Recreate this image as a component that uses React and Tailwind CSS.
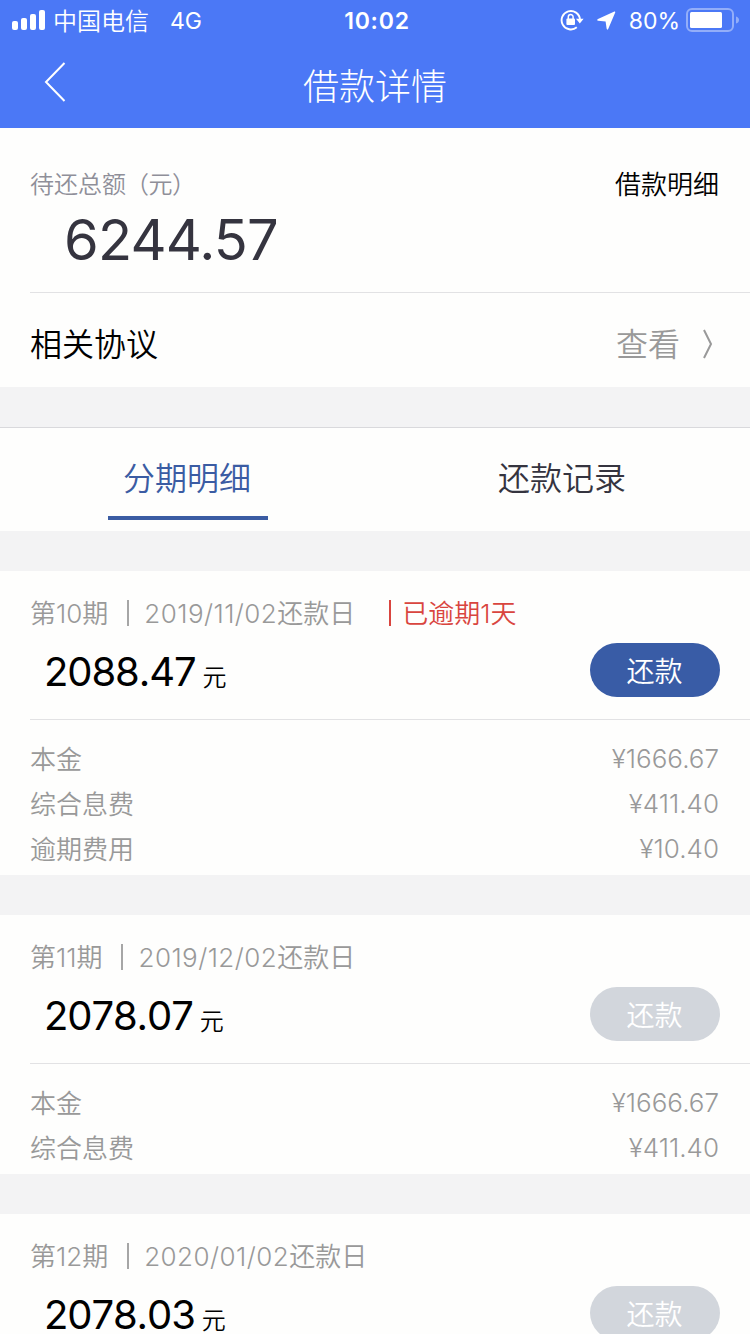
import React, { useState } from "react";
import clsx from "clsx";

const TABS = ["分期明细", "还款记录"];

const INSTALLMENTS = [
  {
    term: "第10期",
    date: "2019/11/02",
    overdue: "已逾期1天",
    amount: "2088.47",
    payable: true,
    items: [
      { label: "本金", value: "¥1666.67" },
      { label: "综合息费", value: "¥411.40" },
      { label: "逾期费用", value: "¥10.40" },
    ],
  },
  {
    term: "第11期",
    date: "2019/12/02",
    amount: "2078.07",
    payable: false,
    items: [
      { label: "本金", value: "¥1666.67" },
      { label: "综合息费", value: "¥411.40" },
    ],
  },
  {
    term: "第12期",
    date: "2020/01/02",
    amount: "2078.03",
    payable: false,
    items: [],
  },
];

const StatusBar = () => (
  <div className="grid h-10 grid-cols-3 items-center px-3 text-2xl leading-9 text-white">
    <div className="flex items-center">
      <svg width="33" height="20" viewBox="0 0 33 20" fill="currentColor">
        <rect x="0" y="11" width="6" height="9" rx="2" />
        <rect x="9" y="8" width="6" height="12" rx="2" />
        <rect x="18" y="4" width="6" height="16" rx="2" />
        <rect x="27" y="0" width="6" height="20" rx="2" />
      </svg>
      <span className="ml-2 pt-[3px] font-[350]">中国电信</span>
      <span className="ml-[21px] pt-0.5 text-[23px]">4G</span>
    </div>
    <div className="pt-0.5 pl-1 text-center text-[23px] font-semibold tracking-[0.8px]">
      10:02
    </div>
    <div className="flex items-center justify-end">
      <svg width="24" height="22" viewBox="0 0 24 22" fill="none">
        <path
          d="M16.8 18.2A9.2 9.2 0 1 1 20 10.5"
          stroke="currentColor"
          strokeWidth="1.9"
        />
        <path d="M16 9.8h7.6l-3.8 4.8z" fill="currentColor" />
        <rect x="6.4" y="9.5" width="8.6" height="6.6" rx="1" fill="currentColor" />
        <path
          d="M8.3 10V8a2.4 2.4 0 0 1 4.8 0v2"
          stroke="currentColor"
          strokeWidth="1.5"
        />
      </svg>
      <svg className="ml-[13px]" width="19" height="19" viewBox="0 0 19 19" fill="currentColor">
        <path d="M17.4.6Q18.6.2 18.2 1.5L11.3 17.8Q10.2 19.6 9.6 17.6L8.6 10.6 1.1 9.8Q-.7 9.2 1 8z" />
      </svg>
      <span className="ml-[13px] pt-0.5 text-[23px]">80%</span>
      <svg className="-mr-[2px] ml-1.5" width="54" height="24" viewBox="0 0 54 24" fill="none">
        <rect
          x="1"
          y="1"
          width="46"
          height="22"
          rx="5"
          stroke="currentColor"
          strokeOpacity="0.4"
          strokeWidth="2"
        />
        <rect x="4" y="4" width="32" height="16" rx="1.5" fill="currentColor" />
        <path d="M50 8.5q3 1 3 3.5t-3 3.5z" fill="currentColor" fillOpacity="0.4" />
      </svg>
    </div>
  </div>
);

const Header = ({ title }) => (
  <header className="h-32 bg-[#4b78f6]">
    <StatusBar />
    <div className="grid h-[88px] grid-cols-[100px_1fr_100px] items-center text-white">
      <button className="pb-1 pl-[44px]">
        <svg width="23" height="42" viewBox="0 0 23 42" fill="none" stroke="currentColor">
          <path d="M20.5 2 2 21l18.5 19" strokeWidth="2" />
        </svg>
      </button>
      <h1 className="pt-1.5 text-center text-4xl font-light">{title}</h1>
    </div>
  </header>
);

const Summary = () => (
  <section className="bg-[#fefefd]">
    <div className="ml-[30px] h-[165px] border-b border-[#e2e2e4] pt-9 pr-[31px]">
      <div className="flex h-10 items-center justify-between">
        <span className="pt-0.5 text-2xl font-[350] text-[#8f8f99]">
          待还总额<span className="-ml-px tracking-[-0.5px]">（元）</span>
        </span>
        <span className="text-[26px] font-[350] text-black">借款明细</span>
      </div>
      <div className="pl-[34px] text-[56px] leading-[72px] tracking-[-0.8px] text-[#35343f]">
        6244.57
      </div>
    </div>
    <div className="flex h-[94px] items-center justify-between px-[30px] pt-2.5">
      <span className="text-[32px] font-[350] text-black">相关协议</span>
      <span className="flex items-center text-[32px] font-[350] text-[#999]">
        查看
        <svg
          className="mr-[6px] mb-0.5 ml-[22px]"
          width="12"
          height="30"
          viewBox="0 0 12 30"
          fill="none"
          stroke="currentColor"
        >
          <path d="M2 1l7 14-7 14" strokeWidth="2" />
        </svg>
      </span>
    </div>
  </section>
);

const Tabs = ({ active, onChange }) => (
  <nav className="mt-10 grid h-[104px] grid-cols-2 border-t border-[#d9d9dc] bg-[#fefefd]">
    {TABS.map((tab, index) => (
      <button
        key={tab}
        onClick={() => onChange(index)}
        className={clsx(
          "mx-auto mt-2 h-[84px] w-40 border-b-4 pt-1.5 pr-px text-[32px] font-[350]",
          active === index
            ? "border-[#3b5ca3] text-[#3b5ca3]"
            : "border-transparent text-[#35343f]"
        )}
      >
        {tab}
      </button>
    ))}
  </nav>
);

const InstallmentCard = ({ term, date, overdue, amount, payable, items }) => (
  <section className="mt-10 bg-[#fefefd] pb-[3px]">
    <div className="ml-[30px] h-[149px] border-b border-[#e2e2e4] pt-[22px] pr-[30px]">
      <div className="flex h-10 items-center text-[26px] font-[350] text-[#999]">
        <span>{term}</span>
        <span className="mr-[15px] ml-[19px] h-[26px] w-0.5 bg-[#a6a6a6]" />
        <span className="tracking-[0.45px]">{date}</span>
        <span>还款日</span>
        {overdue && (
          <span className="ml-[34px] flex items-center text-[#d9453f]">
            <span className="mr-[11px] h-[26px] w-0.5 bg-[#d9453f]" />
            {overdue}
          </span>
        )}
      </div>
      <div className="mt-[10px] flex h-[54px] items-center justify-between">
        <div className="flex items-baseline pt-1 pl-[14px] text-black">
          <span className="text-[40px] font-[380] tracking-[-1.1px] [font-kerning:none]">
            {amount}
          </span>
          <span className="ml-[7px] text-2xl font-[350]">元</span>
        </div>
        <button
          disabled={!payable}
          className={clsx(
            "h-[54px] w-[130px] rounded-full pt-1 pr-px text-[28px] font-[350] text-white",
            payable ? "bg-[#395ca6]" : "bg-[#d2d6dc]"
          )}
        >
          还款
        </button>
      </div>
    </div>
    {items.length > 0 && (
      <ul className="pt-[17px] pr-[31px] pl-[30px] text-[26px] leading-[45px] font-[350] text-[#999]">
        {items.map((item) => (
          <li key={item.label} className="flex h-[45px] justify-between">
            <span>{item.label}</span>
            <span className="-mt-px">{item.value}</span>
          </li>
        ))}
      </ul>
    )}
  </section>
);

export default function App() {
  const [activeTab, setActiveTab] = useState(0);

  return (
    <div className="h-[1334px] w-[750px] overflow-hidden bg-[#f3f3f4] font-['Inter','Noto_Sans_CJK_SC',sans-serif]">
      <Header title="借款详情" />
      <Summary />
      <Tabs active={activeTab} onChange={setActiveTab} />
      {INSTALLMENTS.map((item) => (
        <InstallmentCard key={item.term} {...item} />
      ))}
    </div>
  );
}
